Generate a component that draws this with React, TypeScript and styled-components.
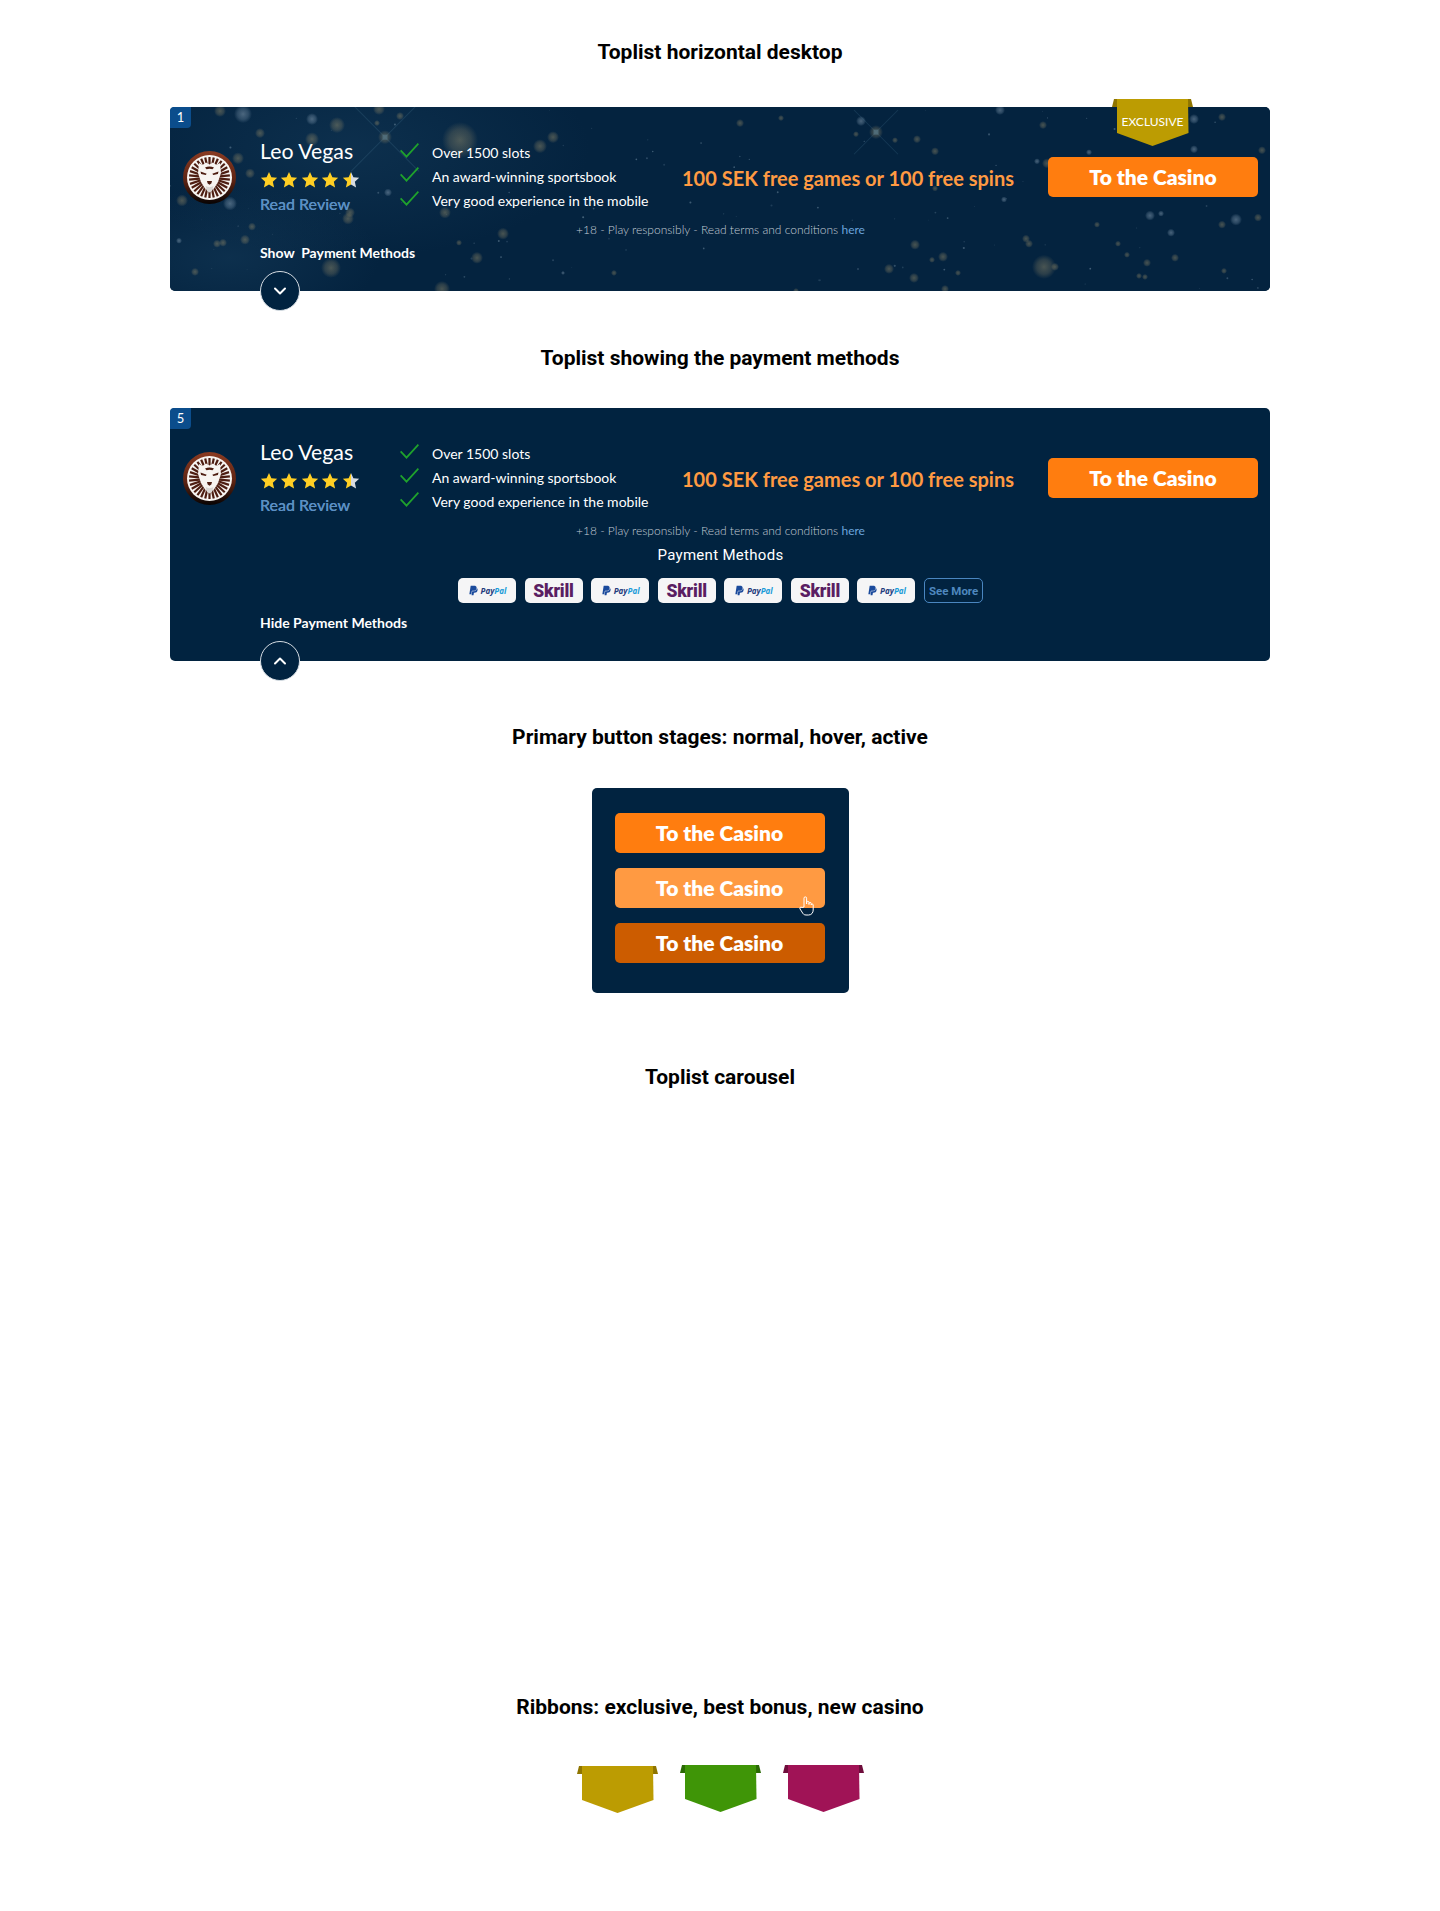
import React from "react";
import styled, { createGlobalStyle } from "styled-components";
import { FaPaypal } from "react-icons/fa";
import { ChevronDown, ChevronUp } from "lucide-react";

const GlobalStyle = createGlobalStyle`
  html, body {
    margin: 0;
    padding: 0;
    background: #fff;
  }
  * {
    box-sizing: border-box;
  }
`;

const Page = styled.div`
  width: 1440px;
  height: 1911px;
  padding-top: 40px;
  font-family: Lato, "Liberation Sans", sans-serif;
  overflow: hidden;
`;

const Heading = styled.h2<{ $top?: number; $bottom: number }>`
  margin: ${({ $top }) => $top ?? 0}px 0 ${({ $bottom }) => $bottom}px;
  font-family: Roboto, "Liberation Sans", sans-serif;
  font-size: 21px;
  line-height: 24px;
  font-weight: 700;
  color: #000;
  text-align: center;
`;

const Card = styled.section`
  position: relative;
  width: 1100px;
  margin: 0 auto;
  padding: 31px 12px 29px 13px;
  border-radius: 5px;
  background: #012340;
  color: #fff;
`;

const StarField = styled.svg`
  position: absolute;
  inset: 0;
  width: 100%;
  height: 100%;
  border-radius: 5px;
`;

const Rank = styled.span`
  position: absolute;
  top: 0;
  left: 0;
  width: 21px;
  height: 21px;
  border-radius: 4px 0 4px 0;
  background: #0b4d8c;
  font-size: 13px;
  line-height: 21px;
  text-align: center;
`;

const TopRow = styled.div`
  position: relative;
  display: grid;
  grid-template-columns: 77px 140px 260px 1fr 210px;
  height: 84px;
`;

const Brand = styled.div`
  display: flex;
  flex-direction: column;
  align-items: flex-start;
`;

const BrandName = styled.div`
  font-size: 21.3px;
  line-height: 26px;
`;

const Stars = styled.div`
  display: flex;
  gap: 2.4px;
  margin-top: 7px;
  height: 18px;
`;

const ReviewLink = styled.a`
  margin-top: 5px;
  font-size: 16px;
  line-height: 20px;
  font-weight: 500;
  color: #5b8fc3;
  text-shadow: 0 0 0.4px #5b8fc3;
`;

const Logo = styled.svg`
  width: 53px;
  height: 53px;
  margin-top: 13px;
`;

const Features = styled.ul`
  list-style: none;
  margin: 2px 0 0;
  padding: 0;
`;

const Feature = styled.li`
  display: flex;
  align-items: center;
  gap: 13px;
  height: 24px;
  font-size: 14px;
  white-space: nowrap;

  svg {
    margin-bottom: 4px;
  }
`;

const Bonus = styled.div`
  align-self: start;
  padding: 27px 12px 0 0;
  font-size: 20px;
  line-height: 26px;
  font-weight: 700;
  color: #ff9a42;
  text-align: center;
  white-space: nowrap;
`;

const CasinoButton = styled.button<{ $tone: string }>`
  display: block;
  width: 210px;
  height: 40px;
  padding: 0 0 2px;
  border: 0;
  border-radius: 5px;
  background: ${({ $tone }) => $tone};
  color: #fff;
  font-family: Lato, "Liberation Sans", sans-serif;
  font-size: 21px;
  font-weight: 800;
  text-align: center;
`;

const CtaCell = styled.div`
  padding-top: 19px;
`;

const Terms = styled.p`
  position: relative;
  margin: 0;
  font-size: 12px;
  line-height: 16px;
  font-weight: 300;
  color: #c3ccd5;
  text-align: center;

  a {
    color: #6ba3db;
    font-weight: 400;
  }
`;

const ToggleLabel = styled.div<{ $top: number }>`
  position: relative;
  margin: ${({ $top }) => $top}px 0 0 77px;
  font-size: 14px;
  line-height: 18px;
  font-weight: 700;
  white-space: pre;
`;

const ToggleButton = styled.button`
  position: absolute;
  left: 90px;
  bottom: -20px;
  display: flex;
  align-items: center;
  justify-content: center;
  width: 40px;
  height: 40px;
  padding: 0;
  border: 1px solid #d6dde3;
  border-radius: 50%;
  background: #012340;
  color: #fff;
`;

const Ribbon = styled.svg`
  display: block;
  width: 81px;
  height: 47px;
`;

const RibbonSlot = styled.div`
  position: absolute;
  top: -8px;
  right: 77px;
  width: 81px;
  height: 47px;
`;

const RibbonText = styled.span`
  position: absolute;
  top: 15px;
  left: 0;
  width: 100%;
  font-size: 12px;
  line-height: 16px;
  color: #fff;
  text-align: center;
`;

const PaymentTitle = styled.div`
  position: relative;
  margin-top: 6px;
  font-family: Roboto, "Liberation Sans", sans-serif;
  font-size: 15px;
  line-height: 20px;
  letter-spacing: 0.3px;
  text-align: center;
`;

const PaymentRow = styled.div`
  position: relative;
  display: flex;
  justify-content: center;
  gap: 8.6px;
  margin-top: 13px;
`;

const Chip = styled.div`
  display: flex;
  align-items: center;
  justify-content: center;
  gap: 2px;
  width: 58px;
  height: 25px;
  border-radius: 5px;
  background: #f5f5f6;
`;

const PayPalText = styled.span`
  font-family: "Open Sans", "Liberation Sans", sans-serif;
  font-size: 8px;
  font-style: italic;
  font-weight: 700;
  color: #233b7c;

  b {
    color: #199bd8;
    font-weight: 700;
  }
`;

const SkrillText = styled.span`
  font-family: Roboto, "Liberation Sans", sans-serif;
  font-size: 17.5px;
  font-weight: 900;
  letter-spacing: -0.2px;
  color: #5a1e62;
`;

const SeeMore = styled(Chip)`
  width: 59px;
  border: 1px solid #4a86c0;
  background: transparent;
  font-family: Roboto, "Liberation Sans", sans-serif;
  font-size: 11.5px;
  font-weight: 700;
  color: #4f88bf;
  white-space: nowrap;
`;

const ButtonPanel = styled.div`
  position: relative;
  display: flex;
  flex-direction: column;
  gap: 15px;
  width: 257px;
  height: 205px;
  margin: 0 auto;
  padding: 25px 23px;
  border-radius: 5px;
  background: #012340;
`;

const HandCursor = styled.svg`
  position: absolute;
  left: 207px;
  top: 108px;
  width: 16px;
  height: 20px;
`;

const CarouselGap = styled.div`
  height: 606px;
`;

const RibbonRow = styled.div`
  display: flex;
  justify-content: center;
  gap: 22px;
`;

const RibbonCell = styled.div<{ $drop?: boolean }>`
  margin-top: ${({ $drop }) => ($drop ? 1 : 0)}px;
`;

// big dots read off the reference: x, y, radius, warm (1) or pale (0)
const DOTS: number[][] = [
  [50, 4, 6, 1], [73, 7, 9, 0], [142, 12, 6, 0], [167, 18, 8, 1], [90, 26, 5, 1], [142, 32, 7, 1], [290, 33, 18, 1],
  [383, 30, 6, 1], [370, 39, 7, 1], [68, 51, 6, 1], [80, 66, 5, 1], [12, 93, 6, 1], [60, 96, 7, 0], [218, 85, 4, 0],
  [275, 105, 6, 1], [333, 126, 6, 1], [82, 119, 4, 1], [75, 132, 5, 1], [53, 135, 4, 1], [47, 136, 4, 1], [9, 133, 3, 0],
  [289, 135, 3, 1], [307, 150, 6, 1], [161, 160, 10, 1], [25, 164, 4, 1], [272, 181, 8, 1], [230, 9, 4, 1], [209, 2, 6, 1],
  [207, 16, 3, 1], [180, 105, 5, 1], [178, 111, 6, 1], [444, 165, 3, 1], [393, 165, 2, 0],
  [570, 16, 4, 1], [611, 11, 3, 1], [691, 14, 5, 0], [686, 27, 3, 1], [725, 33, 3, 1], [747, 32, 4, 1], [765, 44, 4, 1],
  [765, 81, 3, 1], [834, 92, 3, 0], [830, 3, 5, 0], [873, 18, 4, 1], [867, 54, 3, 0], [877, 56, 5, 1], [919, 45, 3, 0],
  [1024, 42, 4, 0], [1052, 10, 4, 1], [1024, 12, 5, 0], [1092, 43, 4, 1], [980, 108, 5, 0], [991, 106, 3, 0], [1001, 125, 4, 0],
  [1052, 117, 4, 1], [1066, 112, 6, 0], [1088, 110, 4, 1], [927, 117, 3, 1], [856, 131, 4, 1], [859, 136, 4, 1],
  [745, 137, 5, 1], [773, 149, 5, 1], [762, 152, 3, 1], [719, 161, 5, 1], [744, 170, 5, 1], [788, 165, 3, 1],
  [874, 159, 12, 1], [885, 159, 4, 1], [977, 155, 4, 1], [957, 147, 3, 1], [948, 136, 3, 1], [1005, 150, 4, 1],
  [969, 168, 3, 1], [975, 169, 3, 1], [1054, 163, 3, 1], [775, 181, 4, 1], [626, 183, 3, 1],
];

// small specks, from a fixed seed so every render is the same
const seeded = (count: number) => {
  let s = 7919;
  const next = () => {
    s = (s * 16807) % 2147483647;
    return s / 2147483647;
  };
  return Array.from({ length: count }, () => ({
    x: next() * 1100,
    y: next() * 183,
    r: 0.4 + next() * 0.7,
    o: 0.15 + next() * 0.3,
  }));
};

const SPECKS = seeded(110);

const Sparkle = ({ x, y, size }: { x: number; y: number; size: number }) => (
  <g>
    <line x1={x - size} y1={y - size} x2={x + size} y2={y + size} stroke="#4f7f9c" strokeWidth="1" opacity="0.22" />
    <line x1={x - size} y1={y + size} x2={x + size} y2={y - size} stroke="#4f7f9c" strokeWidth="1" opacity="0.22" />
    <circle cx={x} cy={y} r="7" fill="url(#warm)" />
    <rect x={x - 2.5} y={y - 2.5} width="5" height="5" fill="#51707f" opacity="0.8" />
  </g>
);

const Night = () => (
  <StarField viewBox="0 0 1100 183" preserveAspectRatio="none">
    <defs>
      <radialGradient id="warm">
        <stop offset="0%" stopColor="#b9a673" stopOpacity="0.38" />
        <stop offset="60%" stopColor="#a8966a" stopOpacity="0.24" />
        <stop offset="100%" stopColor="#a8966a" stopOpacity="0" />
      </radialGradient>
      <radialGradient id="pale">
        <stop offset="0%" stopColor="#a9bdcf" stopOpacity="0.42" />
        <stop offset="60%" stopColor="#93abc0" stopOpacity="0.26" />
        <stop offset="100%" stopColor="#93abc0" stopOpacity="0" />
      </radialGradient>
      <radialGradient id="haze">
        <stop offset="0%" stopColor="#1f4a6b" stopOpacity="0.32" />
        <stop offset="100%" stopColor="#1f4a6b" stopOpacity="0" />
      </radialGradient>
    </defs>
    <rect width="1100" height="183" rx="5" fill="#04233f" />
    <ellipse cx="180" cy="40" rx="240" ry="110" fill="url(#haze)" />
    <ellipse cx="60" cy="150" rx="150" ry="70" fill="url(#haze)" />
    {SPECKS.map((d, i) => (
      <circle key={i} cx={d.x} cy={d.y} r={d.r} fill="#8fa9bd" opacity={d.o} />
    ))}
    {DOTS.map(([x, y, r, warm], i) => (
      <circle key={i} cx={x} cy={y} r={r} fill={warm ? "url(#warm)" : "url(#pale)"} />
    ))}
    <Sparkle x={215} y={30} size={34} />
    <Sparkle x={706} y={25} size={22} />
  </StarField>
);

const STAR = "M12 1.2l3.2 7.1 7.7.8-5.8 5.2 1.7 7.6L12 18.1l-6.8 3.8 1.7-7.6L1.1 9.1l7.7-.8z";

const StarIcon = ({ half, id }: { half?: boolean; id?: string }) => (
  <svg width="18" height="18" viewBox="0 0 24 24">
    {half && (
      <defs>
        <linearGradient id={id}>
          <stop offset="50%" stopColor="#ffcf24" />
          <stop offset="50%" stopColor="#d8dce1" />
        </linearGradient>
      </defs>
    )}
    <path d={STAR} fill={half ? `url(#${id})` : "#ffcf24"} />
  </svg>
);

const Check = () => (
  <svg width="19" height="15" viewBox="0 0 19 15" fill="none">
    <path d="M0.6 7.4L6.5 13.6L18.4 0.6" stroke="#1fa22c" strokeWidth="1.8" />
  </svg>
);

// lion head badge, drawn by hand: ring, rays, mane and face
const LionLogo = () => {
  const rays = Array.from({ length: 30 }, (_, i) => (i * 360) / 30);
  return (
    <Logo viewBox="0 0 53 53">
      <defs>
        <linearGradient id="ring" x1="0" y1="0" x2="0" y2="1">
          <stop offset="0%" stopColor="#8a3b22" />
          <stop offset="55%" stopColor="#5e2413" />
          <stop offset="100%" stopColor="#070303" />
        </linearGradient>
      </defs>
      <circle cx="26.5" cy="26.5" r="26.5" fill="url(#ring)" />
      <circle cx="26.5" cy="26.5" r="22.5" fill="#f7f4f1" />
      {rays.map((a) => (
        <rect key={a} x="25.4" y="6" width="2.2" height="13" fill="#4d1d11" transform={`rotate(${a} 26.5 26.5)`} />
      ))}
      <path d="M16 12l3.5 2 3.5-2.500 3.500 2 3.500-2 3.500 2.500 3.500-2 1 10-3 9-4 6.500-4.500 3-4.500-3-4-6.500-3-9z" fill="#f7f4f1" />
      <path d="M17.500 20.500l6.200 2.300-1 1.300-4.600-1zM35.500 20.500l-6.200 2.300 1 1.300 4.600-1z" fill="#4d1d11" />
      <path d="M22 16.500c3-1.500 6-1.500 9 0l-1.500 1.800c-2-.8-4-.8-6 0z" fill="#4d1d11" />
      <path d="M24 30h5l-.7 2.500-1.800 1.200-1.800-1.200z" fill="#4d1d11" />
      <path d="M22.500 35c2.500 1.500 5.500 1.500 8 0l-1.500 5-2.500 1.500-2.500-1.500z" fill="#d9d6d3" />
    </Logo>
  );
};

const RibbonShape = ({ tone, fold }: { tone: string; fold: string }) => (
  <Ribbon viewBox="0 0 81 47">
    <path d="M2 0H79L81 8H72L9 8H0z" fill={fold} />
    <path d="M5 0H76L76.5 34L40.5 47L5 34z" fill={tone} />
  </Ribbon>
);

const PayPalChip = () => (
  <Chip>
    <FaPaypal size={11} color="#1a4a9c" />
    <PayPalText>
      Pay<b>Pal</b>
    </PayPalText>
  </Chip>
);

const SkrillChip = () => (
  <Chip>
    <SkrillText>Skrill</SkrillText>
  </Chip>
);

const CardTop = ({ cardId }: { cardId: string }) => (
  <TopRow>
    <LionLogo />
    <Brand>
      <BrandName>Leo Vegas</BrandName>
      <Stars>
        <StarIcon />
        <StarIcon />
        <StarIcon />
        <StarIcon />
        <StarIcon half id={`half-${cardId}`} />
      </Stars>
      <ReviewLink>Read Review</ReviewLink>
    </Brand>
    <Features>
      <Feature>
        <Check />
        Over 1500 slots
      </Feature>
      <Feature>
        <Check />
        An award-winning sportsbook
      </Feature>
      <Feature>
        <Check />
        Very good experience in the mobile
      </Feature>
    </Features>
    <Bonus>100 SEK free games or 100 free spins</Bonus>
    <CtaCell>
      <CasinoButton $tone="#ff7d0f">To the Casino</CasinoButton>
    </CtaCell>
  </TopRow>
);

const TermsLine = () => (
  <Terms>
    +18 - Play responsibly - Read terms and conditions <a>here</a>
  </Terms>
);

const App = () => (
  <Page>
    <GlobalStyle />
    <Heading $bottom={43}>Toplist horizontal desktop</Heading>
    <Card>
      <Night />
      <Rank>1</Rank>
      <CardTop cardId="a" />
      <TermsLine />
      <ToggleLabel $top={6}>Show  Payment Methods</ToggleLabel>
      <ToggleButton>
        <ChevronDown size={20} strokeWidth={2.4} />
      </ToggleButton>
      <RibbonSlot>
        <RibbonShape tone="#bc9c02" fold="#8f7500" />
        <RibbonText>EXCLUSIVE</RibbonText>
      </RibbonSlot>
    </Card>

    <Heading $top={55} $bottom={38}>Toplist showing the payment methods</Heading>
    <Card>
      <Rank>5</Rank>
      <CardTop cardId="b" />
      <TermsLine />
      <PaymentTitle>Payment Methods</PaymentTitle>
      <PaymentRow>
        <PayPalChip />
        <SkrillChip />
        <PayPalChip />
        <SkrillChip />
        <PayPalChip />
        <SkrillChip />
        <PayPalChip />
        <SeeMore>See More</SeeMore>
      </PaymentRow>
      <ToggleLabel $top={11}>Hide Payment Methods</ToggleLabel>
      <ToggleButton>
        <ChevronUp size={20} strokeWidth={2.4} />
      </ToggleButton>
    </Card>

    <Heading $top={64} $bottom={39}>Primary button stages: normal, hover, active</Heading>
    <ButtonPanel>
      <CasinoButton $tone="#ff7d0f">To the Casino</CasinoButton>
      <CasinoButton $tone="#ff9a42">To the Casino</CasinoButton>
      <CasinoButton $tone="#cc5c00">To the Casino</CasinoButton>
      <HandCursor viewBox="0 0 16 20" fill="none" stroke="#fff" strokeWidth="1" strokeLinejoin="round">
        <path d="M5 11V2.200a1.300 1.300 0 0 1 2.600 0V8l0-1.500a1.200 1.200 0 0 1 2.400 0V8.500V7.500a1.100 1.100 0 0 1 2.200 0V9a1 1 0 0 1 2 0v5c0 2.500-1.500 5-4.500 5H7c-2 0-3-1-4-3L1 13c-.7-1.500.8-2.500 2-1.500z" />
      </HandCursor>
    </ButtonPanel>

    <Heading $top={72} $bottom={0}>Toplist carousel</Heading>
    <CarouselGap />
    <Heading $bottom={46}>Ribbons: exclusive, best bonus, new casino</Heading>
    <RibbonRow>
      <RibbonCell $drop>
        <RibbonShape tone="#bc9c02" fold="#8f7500" />
      </RibbonCell>
      <RibbonCell>
        <RibbonShape tone="#3f9507" fold="#2a6a04" />
      </RibbonCell>
      <RibbonCell>
        <RibbonShape tone="#a01356" fold="#6f0d3c" />
      </RibbonCell>
    </RibbonRow>
  </Page>
);

export default App;
